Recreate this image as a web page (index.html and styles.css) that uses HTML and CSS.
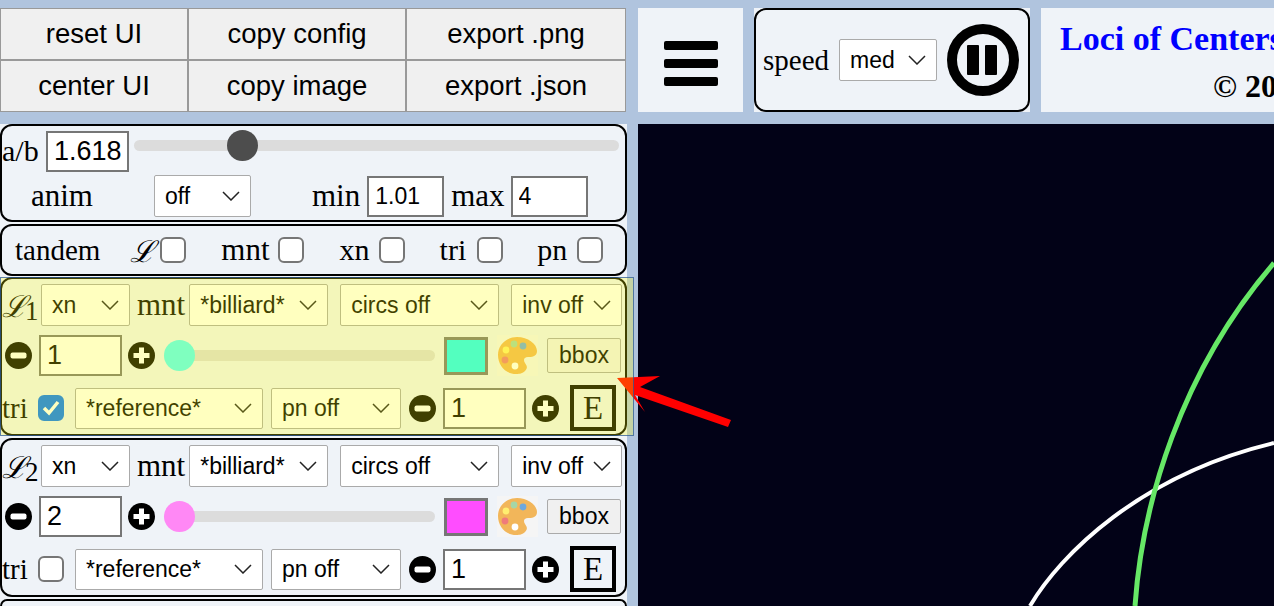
FILE: index.html
```html
<!DOCTYPE html>
<html lang="en">
<head>
	<meta charset="UTF-8">
	<title>Loci of Centers</title>
	<link rel="stylesheet" href="styles.css">
</head>
<body>

<div class="top">
	<div class="btns">
		<button>reset UI</button>
		<button>copy config</button>
		<button>export .png</button>
		<button>center UI</button>
		<button>copy image</button>
		<button>export .json</button>
	</div>
	<div class="burger">
		<span></span><span></span><span></span>
	</div>
	<div class="speed-wrap">
		<div class="speed">
			<label class="lbl lbl-29">speed</label>
			<select class="sel sel-speed"><option>med</option></select>
			<svg class="pause" viewBox="0 0 72 72">
				<circle cx="36" cy="36" r="31" fill="none" stroke="#000" stroke-width="10"/>
				<rect x="20" y="21" width="12" height="30" rx="1"/>
				<rect x="38" y="21" width="12" height="30" rx="1"/>
			</svg>
		</div>
	</div>
	<div class="title">
		<div class="title-main">Loci of Centers of Mounted Triangles</div>
		<div class="title-sub">&copy; 2020</div>
	</div>
</div>

<div class="main">
	<div class="left">

		<div class="panel">
			<div class="row row-ab">
				<label class="lbl lbl-ab">a/b</label>
				<input class="num num-ab" type="text" value="1.618">
				<input class="slider slider-ab" type="range" min="1" max="4" step="0.001" value="1.615">
			</div>
			<div class="row row-anim">
				<label class="lbl lbl-31 lbl-anim">anim</label>
				<select class="sel sel-anim"><option>off</option></select>
				<label class="lbl lbl-31 lbl-min">min</label>
				<input class="num num-small" type="text" value="1.01">
				<label class="lbl lbl-31 lbl-max">max</label>
				<input class="num num-small" type="text" value="4">
			</div>
		</div>

		<div class="panel panel-tandem">
			<div class="row row-tandem">
				<label class="lbl lbl-29">tandem</label>
				<label class="lbl script t-l">&#x2112;</label><input class="chk" type="checkbox">
				<label class="lbl lbl-31 t-mnt">mnt</label><input class="chk" type="checkbox">
				<label class="lbl t-xn">xn</label><input class="chk" type="checkbox">
				<label class="lbl t-tri">tri</label><input class="chk" type="checkbox">
				<label class="lbl t-pn">pn</label><input class="chk" type="checkbox">
			</div>
		</div>

		<div class="panel loc hl">
			<div class="row row-1">
				<label class="lbl loc-name"><span class="script">&#x2112;</span><sub>1</sub></label>
				<select class="sel sel-xn"><option>xn</option></select>
				<label class="lbl lbl-31 lbl-mnt">mnt</label>
				<select class="sel sel-mnt"><option>*billiard*</option></select>
				<select class="sel sel-circ"><option>circs off</option></select>
				<select class="sel sel-inv"><option>inv off</option></select>
			</div>
			<div class="row row-2">
				<svg class="pm pm-first" viewBox="0 0 27 27"><circle cx="13.5" cy="13.5" r="13.5"/><rect x="5.5" y="10.5" width="16" height="6" rx="2" fill="#fff"/></svg>
				<input class="num num-n" type="text" value="1">
				<svg class="pm" viewBox="0 0 27 27"><circle cx="13.5" cy="13.5" r="13.5"/><path d="M11 5.5h5v5.500h5.500v5h-5.500v5.500h-5v-5.500h-5.500v-5h5.500z" fill="#fff"/></svg>
				<input class="slider slider-n slider-cyan" type="range" min="0" max="100" value="0">
				<div class="swatch swatch-cyan"></div>
				<svg class="palette" viewBox="0 0 41 41">
					<rect width="41" height="41" fill="#f5f5f5"/>
					<path d="M20 2C31 2 40 9 40 16C40 22 34 22 31 22C27 22 26 25 28 28C30 31 31 33 28 36C25 39 21 39 19 39C8 39 1 30 1 20C1 10 9 2 20 2Z" fill="#f2b65a"/>
					<circle cx="17" cy="9" r="3.400" fill="#a5d6a7"/>
					<circle cx="26" cy="11" r="3.400" fill="#6fa8dc"/>
					<circle cx="9" cy="15" r="3.400" fill="#ffee70"/>
					<circle cx="8" cy="25" r="3.400" fill="#ef7b7b"/>
					<circle cx="18" cy="31" r="3.400" fill="#fff"/>
				</svg>
				<button class="bbox">bbox</button>
			</div>
			<div class="row row-3">
				<label class="lbl lbl-29 lbl-tri">tri</label>
				<input class="chk chk-tri" type="checkbox" checked>
				<select class="sel sel-ref"><option>*reference*</option></select>
				<select class="sel sel-pn"><option>pn off</option></select>
				<svg class="pm pm-tri" viewBox="0 0 27 27"><circle cx="13.5" cy="13.5" r="13.5"/><rect x="5.5" y="10.5" width="16" height="6" rx="2" fill="#fff"/></svg>
				<input class="num num-n" type="text" value="1">
				<svg class="pm" viewBox="0 0 27 27"><circle cx="13.5" cy="13.5" r="13.5"/><path d="M11 5.5h5v5.500h5.500v5h-5.500v5.500h-5v-5.500h-5.500v-5h5.500z" fill="#fff"/></svg>
				<button class="ebtn">E</button>
			</div>
		</div>

		<div class="panel loc">
			<div class="row row-1">
				<label class="lbl loc-name"><span class="script">&#x2112;</span><sub>2</sub></label>
				<select class="sel sel-xn"><option>xn</option></select>
				<label class="lbl lbl-31 lbl-mnt">mnt</label>
				<select class="sel sel-mnt"><option>*billiard*</option></select>
				<select class="sel sel-circ"><option>circs off</option></select>
				<select class="sel sel-inv"><option>inv off</option></select>
			</div>
			<div class="row row-2">
				<svg class="pm pm-first" viewBox="0 0 27 27"><circle cx="13.5" cy="13.5" r="13.5"/><rect x="5.5" y="10.5" width="16" height="6" rx="2" fill="#fff"/></svg>
				<input class="num num-n" type="text" value="2">
				<svg class="pm" viewBox="0 0 27 27"><circle cx="13.5" cy="13.5" r="13.5"/><path d="M11 5.5h5v5.500h5.500v5h-5.500v5.500h-5v-5.500h-5.500v-5h5.500z" fill="#fff"/></svg>
				<input class="slider slider-n slider-pink" type="range" min="0" max="100" value="0">
				<div class="swatch swatch-pink"></div>
				<svg class="palette" viewBox="0 0 41 41">
					<rect width="41" height="41" fill="#f5f5f5"/>
					<path d="M20 2C31 2 40 9 40 16C40 22 34 22 31 22C27 22 26 25 28 28C30 31 31 33 28 36C25 39 21 39 19 39C8 39 1 30 1 20C1 10 9 2 20 2Z" fill="#f2b65a"/>
					<circle cx="17" cy="9" r="3.400" fill="#a5d6a7"/>
					<circle cx="26" cy="11" r="3.400" fill="#6fa8dc"/>
					<circle cx="9" cy="15" r="3.400" fill="#ffee70"/>
					<circle cx="8" cy="25" r="3.400" fill="#ef7b7b"/>
					<circle cx="18" cy="31" r="3.400" fill="#fff"/>
				</svg>
				<button class="bbox">bbox</button>
			</div>
			<div class="row row-3">
				<label class="lbl lbl-29 lbl-tri">tri</label>
				<input class="chk chk-tri" type="checkbox">
				<select class="sel sel-ref"><option>*reference*</option></select>
				<select class="sel sel-pn"><option>pn off</option></select>
				<svg class="pm pm-tri" viewBox="0 0 27 27"><circle cx="13.5" cy="13.5" r="13.5"/><rect x="5.5" y="10.5" width="16" height="6" rx="2" fill="#fff"/></svg>
				<input class="num num-n" type="text" value="1">
				<svg class="pm" viewBox="0 0 27 27"><circle cx="13.5" cy="13.5" r="13.5"/><path d="M11 5.5h5v5.500h5.500v5h-5.500v5.500h-5v-5.500h-5.500v-5h5.500z" fill="#fff"/></svg>
				<button class="ebtn">E</button>
			</div>
		</div>

		<div class="panel panel-next"></div>
	</div>

	<div class="canvas">
		<svg class="curves" viewBox="638 124 636 482">
			<path d="M1030 606C1060 555 1140 475 1274 443" fill="none" stroke="#fff" stroke-width="4"/>
			<path d="M1135 606C1142 505 1180 372 1274 263" fill="none" stroke="#66e866" stroke-width="5"/>
		</svg>
	</div>
</div>

<svg class="arrow" viewBox="610 370 130 65">
	<polygon points="617,378 660,376 640,387 731,420 728,427 635,395 645,412" fill="#f00"/>
</svg>

</body>
</html>
```

FILE: styles.css
```css
html, body {
	margin: 0;
	height: 606px;
	overflow: hidden;
}

body {
	position: relative;
	background-color: #b0c4de;
	font-family: "Liberation Sans", sans-serif;
	color: #000;
}

.top {
	display: flex;
	gap: 11px;
	height: 104px;
	padding-top: 8px;
}

/* top buttons */
.btns {
	display: grid;
	grid-template-columns: 188px 218px 220px;
	grid-template-rows: 52px 52px;
	width: 627px;
	flex: none;
}

.btns button {
	font-family: "Liberation Sans", sans-serif;
	font-size: 27.5px;
	color: #000;
	background-color: #f0f0f0;
	border: 1px solid #999;
	padding: 0;
}

.burger {
	display: flex;
	flex-direction: column;
	justify-content: center;
	align-items: center;
	gap: 9px;
	width: 105px;
	flex: none;
	box-sizing: border-box;
	padding-top: 6px;
	background-color: #eff3f8;
}

.burger span {
	display: block;
	width: 54px;
	height: 9px;
	border-radius: 2px;
	background-color: #000;
}

.speed-wrap {
	width: 276px;
	flex: none;
	background-color: #eff3f8;
}

.speed {
	display: flex;
	align-items: center;
	height: 100%;
	box-sizing: border-box;
	padding-left: 7px;
	border: 2px solid #000;
	border-radius: 12px;
}

.pause {
	width: 72px;
	height: 72px;
	margin-left: 10px;
}

.title {
	flex: 1;
	min-width: 0;
	overflow: hidden;
	white-space: nowrap;
	background-color: #eff3f8;
	font-family: "Liberation Serif", serif;
	font-weight: bold;
}

.title-main {
	margin: 12px 0 0 19px;
	font-size: 34px;
	color: #00f;
}

.title-sub {
	margin: 10px 0 0 172px;
	font-size: 32px;
}

/* main area */
.main {
	display: flex;
	gap: 11px;
	margin-top: 12px;
}

.left {
	width: 627px;
	height: 482px;
	flex: none;
	background-color: #eff3f8;
}

.canvas {
	flex: 1;
	height: 482px;
	background-color: #020217;
}

.curves {
	display: block;
	width: 100%;
	height: 100%;
}

.panel {
	position: relative;
	box-sizing: border-box;
	margin-bottom: 2px;
	border: 2px solid #000;
	border-radius: 12px;
}

.panel-tandem {
	margin-bottom: 1px;
}

.panel-next {
	height: 7px;
	margin: 0;
	border-bottom: 0;
	border-radius: 12px 12px 0 0;
}

.row {
	display: flex;
	align-items: center;
}

/* form bits */
.lbl {
	font-family: "Liberation Serif", serif;
	font-size: 30px;
	white-space: nowrap;
}

.lbl-29 { font-size: 29px; }
.lbl-31 { font-size: 31px; }

.script {
	font-family: "DejaVu Serif", serif;
	font-style: italic;
	font-size: 30px;
}

.num {
	box-sizing: border-box;
	height: 41px;
	padding: 0 6px;
	border: 2px solid #767676;
	border-radius: 0;
	background-color: #fff;
	font-family: "Liberation Sans", sans-serif;
	font-size: 27px;
	color: #000;
}

.num-ab {
	width: 83px;
	margin-left: 7px;
}

.num-small {
	width: 77px;
	font-size: 23px;
}

.num-n {
	width: 83px;
}

.sel {
	box-sizing: border-box;
	height: 42px;
	padding: 0 0 0 10px;
	border: 1px solid #aaa;
	border-radius: 2px;
	appearance: none;
	background: #fff url("data:image/svg+xml,%3Csvg xmlns='http://www.w3.org/2000/svg' width='18' height='10'%3E%3Cpath d='M1 1l8 8 8-8' fill='none' stroke='%23222' stroke-width='1.500'/%3E%3C/svg%3E") no-repeat right 10px center;
	font-family: "Liberation Sans", sans-serif;
	font-size: 23px;
	color: #000;
}

.sel-speed { width: 98px; margin-left: 10px; }
.sel-anim { width: 97px; margin-left: 60px; }
.sel-xn { width: 89px; }
.sel-mnt { width: 139px; margin-left: 4px; }
.sel-circ { width: 159px; margin-left: 12px; }
.sel-inv { width: 111px; margin-left: 12px; }
.sel-ref { width: 188px; margin-left: 11px; height: 41px; }
.sel-pn { width: 130px; margin-left: 8px; height: 41px; }

.chk {
	box-sizing: border-box;
	width: 26px;
	height: 26px;
	margin: 0;
	flex: none;
	appearance: none;
	border: 2px solid #767676;
	border-radius: 6px;
	background-color: #fff;
}

.chk:checked {
	border-color: #0075ff;
	background: #0075ff url("data:image/svg+xml,%3Csvg xmlns='http://www.w3.org/2000/svg' width='22' height='22'%3E%3Cpath d='M4 11l5 5 9-11' fill='none' stroke='%23fff' stroke-width='3.500'/%3E%3C/svg%3E") no-repeat center;
}

.slider {
	appearance: none;
	margin: 0;
	height: 32px;
	background: transparent;
}

.slider::-webkit-slider-runnable-track {
	height: 11px;
	border-radius: 6px;
	background-color: #dcdcdc;
}

.slider::-webkit-slider-thumb {
	appearance: none;
	width: 31px;
	height: 31px;
	margin-top: -10px;
	border-radius: 50%;
	background-color: #4d4d4d;
}

.slider-cyan::-webkit-slider-thumb { background-color: #55ffff; }
.slider-pink::-webkit-slider-thumb { background-color: #ff88f5; }

/* a/b panel */
.row-ab {
	height: 42px;
	padding-top: 4px;
}

.lbl-ab {
	width: 37px;
}

.slider-ab {
	width: 485px;
	margin: -12px 0 0 5px;
}

.row-anim {
	height: 48px;
}

.lbl-anim { margin-left: 29px; width: 63px; }
.lbl-min { margin-left: 61px; margin-right: 7px; }
.lbl-max { margin-left: 7px; margin-right: 6px; }

/* tandem panel */
.row-tandem {
	height: 48px;
	padding-left: 13px;
}

.t-l { width: 25px; margin-left: 30px; margin-right: 5px; }
.t-mnt { margin-left: 35px; margin-right: 8px; }
.t-xn { margin-left: 36px; margin-right: 9px; }
.t-tri { margin-left: 35px; margin-right: 11px; }
.t-pn { margin-left: 34px; margin-right: 10px; }

/* locus panels */
.loc {
	height: 159px;
	padding-top: 5px;
}

.loc-name {
	width: 39px;
	flex: none;
}

.loc-name sub {
	margin-left: -2px;
	font-size: 27px;
	line-height: 0;
	vertical-align: -3px;
}

.lbl-mnt { margin-left: 7px; }

.row-1 { height: 42px; }
.row-2 { height: 41px; margin-top: 9px; }
.row-3 { height: 46px; margin-top: 9px; }

.pm {
	width: 27px;
	height: 27px;
	flex: none;
	margin-left: 6px;
}

.pm-first {
	margin-left: 3px;
	margin-right: 7px;
}

.pm-tri {
	margin-left: 8px;
	margin-right: 7px;
}

.slider-n {
	width: 271px;
	margin-left: 9px;
}

.swatch {
	box-sizing: border-box;
	width: 44px;
	height: 38px;
	margin-left: 9px;
	border: 3px solid #767676;
}

.swatch-cyan { background-color: #1affff; }
.swatch-pink { background-color: #ff4dff; }

.palette {
	width: 41px;
	height: 41px;
	margin-left: 9px;
}

.bbox {
	box-sizing: border-box;
	width: 74px;
	height: 35px;
	margin-left: 9px;
	padding: 0;
	border: 1px solid #aaa;
	border-radius: 2px;
	background-color: #f0f0f0;
	font-family: "Liberation Sans", sans-serif;
	font-size: 23px;
	color: #000;
}

.lbl-tri { width: 36px; }

.ebtn {
	box-sizing: border-box;
	width: 46px;
	height: 46px;
	margin-left: 11px;
	padding: 0;
	border: 4px solid #000;
	background: transparent;
	font-family: "Liberation Serif", serif;
	font-size: 33px;
	color: #000;
}

/* highlight over the first locus, and the arrow pointing at it */
.hl::after {
	content: "";
	position: absolute;
	top: -2px;
	left: -2px;
	right: -9px;
	bottom: -2px;
	z-index: 2;
	border: 1px solid rgba(30, 80, 160, 0.7);
	background-color: rgba(255, 255, 0, 0.25);
	pointer-events: none;
}

.arrow {
	position: absolute;
	left: 610px;
	top: 370px;
	width: 130px;
	height: 65px;
	z-index: 1;
}
```
